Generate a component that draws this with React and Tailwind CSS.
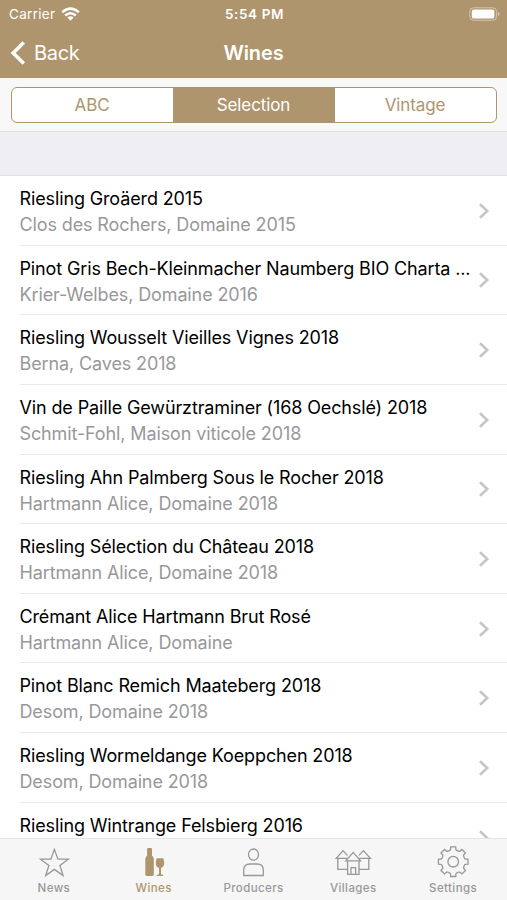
import { clsx } from "clsx";

const wines = [
  { name: "Riesling Groäerd 2015", producer: "Clos des Rochers, Domaine 2015" },
  {
    name: "Pinot Gris Bech-Kleinmacher Naumberg BIO Charta ...",
    producer: "Krier-Welbes, Domaine 2016",
  },
  { name: "Riesling Wousselt Vieilles Vignes 2018", producer: "Berna, Caves 2018" },
  {
    name: "Vin de Paille Gewürztraminer (168 Oechslé) 2018",
    producer: "Schmit-Fohl, Maison viticole 2018",
  },
  {
    name: "Riesling Ahn Palmberg Sous le Rocher 2018",
    producer: "Hartmann Alice, Domaine 2018",
  },
  { name: "Riesling Sélection du Château 2018", producer: "Hartmann Alice, Domaine 2018" },
  { name: "Crémant Alice Hartmann Brut Rosé", producer: "Hartmann Alice, Domaine" },
  { name: "Pinot Blanc Remich Maateberg 2018", producer: "Desom, Domaine 2018" },
  { name: "Riesling Wormeldange Koeppchen 2018", producer: "Desom, Domaine 2018" },
  { name: "Riesling Wintrange Felsbierg 2016", producer: "" },
];

// Outline of the settings gear: 8 teeth around a circle
const gearPath = () => {
  const points = [];
  for (let i = 0; i < 8; i++) {
    const a = (i * Math.PI) / 4;
    [
      [-0.3, 11.8],
      [-0.22, 12.3],
      [-0.17, 15],
      [0.17, 15],
      [0.22, 12.3],
      [0.3, 11.8],
    ].forEach(([d, r]) => {
      points.push(`${(18.2 + r * Math.sin(a + d)).toFixed(2)} ${(15.7 - r * Math.cos(a + d)).toFixed(2)}`);
    });
  }
  return `M${points.join("L")}Z`;
};

const StarIcon = () => (
  <path d="M18.4 3.4L21.9 13.2H32.3L23.9 19.4L27.1 29.6L18.4 23.4L9.7 29.6L12.9 19.4L4.5 13.2H14.9Z" />
);

const WineIcon = () => (
  <g fill="currentColor" stroke="none">
    <path d="M11.1 3Q11.1 2 12.1 2H15Q16 2 16 3V9.4Q17.8 11 17.8 13.6V28.6Q17.8 30 16.4 30H10.7Q9.3 30 9.3 28.6V13.6Q9.3 11 11.1 9.4Z" />
    <path d="M20.6 12.2H27.4L28.2 16.6Q28.4 21 25 22V28.3L27.2 29.1V30H20.8V29.1L23 28.3V22Q19.6 21 19.8 16.6Z" />
  </g>
);

const PersonIcon = () => (
  <>
    <ellipse cx="18.5" cy="8.6" rx="5" ry="5.6" />
    <path d="M8.7 29.5V24Q8.7 18 15 18H22Q28.3 18 28.3 24V29.5Z" />
  </>
);

const HousesIcon = () => (
  <>
    <path d="M12.4 9.4L8 4.6L1.2 12.3H12.6M2.8 12.3V23.4H12.6M24 9.4L28.4 4.6L35.4 12.3H23.8M33.8 12.3V23.4H24" />
    <path d="M18.2 6.4L10.8 14.8H25.6ZM12.6 14.8V28.4H24V14.8M16 28.4V21.6H20.6V28.4" />
  </>
);

const GearIcon = () => (
  <>
    <path d={gearPath()} />
    <circle cx="18.2" cy="15.7" r="5.3" />
  </>
);

const tabs = [
  { label: "News", Icon: StarIcon },
  { label: "Wines", Icon: WineIcon, active: true },
  { label: "Producers", Icon: PersonIcon },
  { label: "Villages", Icon: HousesIcon },
  { label: "Settings", Icon: GearIcon },
];

const StatusBar = () => (
  <div className="grid h-[27px] grid-cols-3 items-center pr-[7px] pl-[9px] text-[13.5px]">
    <div className="flex items-center gap-[6px] pt-px">
      <span className="tracking-[0.3px]">Carrier</span>
      <svg className="h-[14px] w-[19px]" viewBox="0 0 19 14" fill="none" stroke="currentColor" strokeWidth="2.5">
        <path d="M1.2 5.2Q9.5 -2 17.8 5.2M4.2 8.5Q9.5 4 14.8 8.5" />
        <path d="M6.4 10.6Q9.5 8 12.6 10.6L9.5 13.7Z" fill="currentColor" stroke="none" />
      </svg>
    </div>
    <span className="pt-px text-center font-semibold tracking-[0.6px]">5:54 PM</span>
    <svg className="h-[14px] w-[31px] justify-self-end" viewBox="0 0 31 14" fill="none">
      <rect x="0.8" y="0.8" width="26.8" height="12.4" rx="3.8" stroke="white" strokeOpacity="0.45" />
      <rect x="2.8" y="2.4" width="22.6" height="9.2" rx="2.2" fill="white" />
      <path d="M29 5Q30.6 5.6 30.6 7Q30.6 8.4 29 9Z" fill="white" fillOpacity="0.5" />
    </svg>
  </div>
);

const NavBar = () => (
  <div className="grid h-[51px] grid-cols-3 items-center px-[10px]">
    <button type="button" className="flex items-center gap-[8px] text-[20px] tracking-[-0.3px]">
      <svg className="h-6 w-4" viewBox="0 0 16 24" fill="none" stroke="currentColor" strokeWidth="3.6">
        <path d="M13.8 1.5L3.2 12L13.8 22.5" />
      </svg>
      Back
    </button>
    <h1 className="text-center text-[20px] font-semibold tracking-[-0.1px]">Wines</h1>
  </div>
);

const WineRow = ({ wine }) => (
  <li className="flex h-[69.65px] shrink-0 pl-[19.5px]">
    <div className="flex min-w-0 flex-1 items-center border-b border-[#e9e9eb] pr-[17px]">
      <div className="h-full min-w-0 flex-1 pt-[10px]">
        <p className="text-[18px] leading-[26px] tracking-[-0.13px] whitespace-nowrap text-black">{wine.name}</p>
        <p className="text-[18px] leading-[26px] tracking-[-0.12px] text-[#98989a]">{wine.producer}</p>
      </div>
      <svg className="mt-px h-4 w-3 shrink-0" viewBox="0 0 12 16" fill="none" stroke="#c5c5c9" strokeWidth="2.6">
        <path d="M2 1.2L9.2 8L2 14.8" />
      </svg>
    </div>
  </li>
);

export default function App() {
  return (
    <div className="flex h-[900px] w-[507px] flex-col overflow-hidden bg-white font-['Inter',sans-serif]">
      <header className="shrink-0 bg-[#ae956d] text-white">
        <StatusBar />
        <NavBar />
      </header>

      {/* Sort mode */}
      <div className="h-[54px] shrink-0 border-b border-[#e2e2e5] bg-[#f8f8f8] px-[10.5px] pt-[9px]">
        <div className="grid h-9 grid-cols-[161px_1fr_161px] overflow-hidden rounded-[6px] border-[1.5px] border-[#ae956d] bg-white text-[17px] tracking-[-0.1px] text-[#ae956d]">
          <button type="button" className="pt-px">ABC</button>
          <button type="button" className="bg-[#ae956d] pt-px text-white">Selection</button>
          <button type="button" className="pt-px">Vintage</button>
        </div>
      </div>

      <div className="h-11 shrink-0 border-b border-[#e0e0e3] bg-[#eeeef3]" />

      <ul className="flex min-h-0 flex-1 flex-col overflow-hidden">
        {wines.map((wine) => (
          <WineRow key={wine.name} wine={wine} />
        ))}
      </ul>

      <nav className="flex h-[62px] shrink-0 border-t border-[#e4e4e4] bg-[#f6f6f6] px-1">
        {tabs.map(({ label, Icon, active }) => (
          <button
            key={label}
            type="button"
            className={clsx(
              "flex flex-1 flex-col items-center pt-[7px]",
              active ? "text-[#ae956d]" : "text-[#989898]"
            )}
          >
            <svg className="h-8 w-9 overflow-visible" viewBox="0 0 36 32" fill="none" stroke="currentColor" strokeWidth="1.3">
              <Icon />
            </svg>
            <span className="mt-[3px] text-[11.5px] leading-[14px] font-medium tracking-[0.4px]">{label}</span>
          </button>
        ))}
      </nav>
    </div>
  );
}
